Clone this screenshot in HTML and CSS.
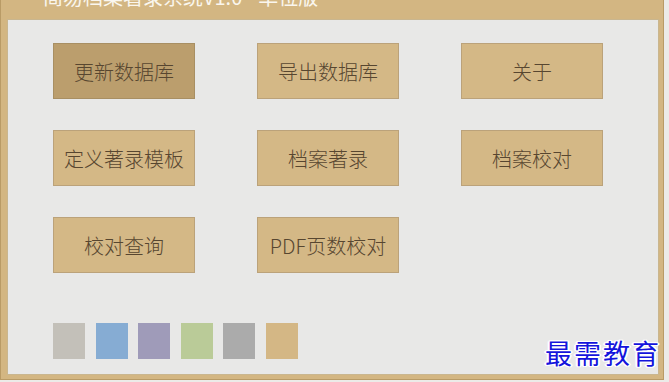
FILE: index.html
```html
<!DOCTYPE html>
<html lang="zh-CN">
<head>
    <meta charset="UTF-8">
    <meta name="viewport" content="width=device-width, initial-scale=1.0">
    <title>简易档案著录系统</title>
    <link rel="stylesheet" href="styles.css">
</head>
<body>
    <div class="window">
        <div class="titlebar">
            <div class="title">简易档案著录系统V1.0 - 单位版</div>
        </div>
        <div class="panel">
            <div class="button-grid">
                <button class="btn active">更新数据库</button>
                <button class="btn">导出数据库</button>
                <button class="btn">关于</button>
                <button class="btn">定义著录模板</button>
                <button class="btn">档案著录</button>
                <button class="btn">档案校对</button>
                <button class="btn">校对查询</button>
                <button class="btn">PDF页数校对</button>
            </div>
            <div class="swatches">
                <span class="swatch stone"></span>
                <span class="swatch blue"></span>
                <span class="swatch purple"></span>
                <span class="swatch green"></span>
                <span class="swatch gray"></span>
                <span class="swatch tan"></span>
            </div>
        </div>
    </div>
    <div class="watermark">最需教育</div>
</body>
</html>
```

FILE: styles.css
```css
body {
    margin: 0;
    width: 669px;
    height: 382px;
    overflow: hidden;
    background-color: #ecebe8;
    font-family: "Noto Sans CJK SC", "Noto Sans", sans-serif;
    position: relative;
}
.window {
    width: 662px;
    height: 379px;
    background-color: #d3b682;
    border: 1px solid #b99b66;
    border-top: none;
    display: flex;
    flex-direction: column;
}
.titlebar {
    height: 19px;
    overflow: hidden;
    padding-left: 42px;
}
.title {
    margin-top: -13px;
    line-height: 19px;
    font-size: 20px;
    color: #faf6ee;
    white-space: nowrap;
}
.panel {
    margin: 0 4px 0 6px;
    height: 356px;
    background-color: #e8e8e7;
    border: 1px solid #c9b68f;
    padding: 23px 0 0 45px;
    box-sizing: border-box;
}
.button-grid {
    display: grid;
    grid-template-columns: repeat(3, 142px);
    grid-auto-rows: 56px;
    column-gap: 62px;
    row-gap: 31px;
}
.btn {
    font-family: "Noto Sans CJK SC", "Noto Sans", sans-serif;
    font-size: 20px;
    font-weight: 300;
    color: #574630;
    background-color: #d4b886;
    border: 1px solid #bba27a;
    padding: 0;
    cursor: pointer;
}
.btn.active {
    background-color: #bb9e6d;
    border-color: #a88f63;
}
.swatches {
    display: flex;
    gap: 10.6px;
    margin-top: 50px;
}
.swatch {
    width: 32px;
    height: 36px;
}
.stone { background-color: #c3c0b9; }
.blue { background-color: #86acd3; }
.purple { background-color: #9f9bb9; }
.green { background-color: #bacb98; }
.gray { background-color: #ababab; }
.tan { background-color: #d4b785; }
.watermark {
    position: absolute;
    left: 545px;
    top: 333px;
    font-size: 27px;
    font-family: "Noto Sans CJK SC", serif;
    color: #1414dc;
    letter-spacing: 2px;
    text-shadow: 1px 1px 0 #fff, -1px -1px 0 #fff, 1px -1px 0 #fff, -1px 1px 0 #fff, 2px 0 0 #fff, -2px 0 0 #fff;
}
```
